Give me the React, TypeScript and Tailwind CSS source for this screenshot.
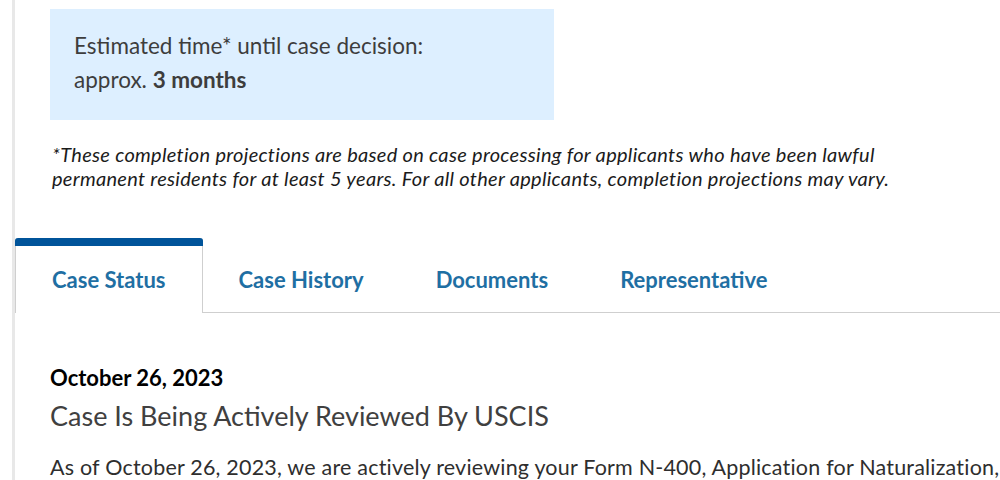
const tabs = ['Case Status', 'Case History', 'Documents', 'Representative']

function App(): React.JSX.Element {
  return (
    <div
      className="w-[1000px] h-[480px] overflow-hidden bg-white"
      style={{ fontFamily: 'Lato, "Noto Sans", sans-serif' }}
    >
      <div className="ml-[12px] h-full border-l-[3px] border-[#e8e8e8] pt-[9px]">
        {/* Processing time estimate */}
        <div className="ml-[35px] w-[504px] h-[111px] bg-[#ddefff] pl-[24px] pt-[20px] text-[22.5px] leading-[34px] text-[#3d3d3d]">
          <p>Estimated time* until case decision:</p>
          <p>
            approx. <span className="font-bold">3 months</span>
          </p>
        </div>

        {/* Footnote */}
        <p className="ml-[37px] mt-[22px] text-[20px] leading-[24px] italic text-[#1b1b1b] tracking-[0.3px] whitespace-nowrap">
          *These completion projections are based on case processing for applicants who have been lawful
          <br />
          permanent residents for at least 5 years. For all other applicants, completion projections may vary.
        </p>

        {/* Tabs */}
        <div className="mt-[48px] flex border-b border-[#cfcfcf] h-[75px]">
          {tabs.map((tab, i) =>
            i === 0 ? (
              <div
                key={tab}
                className="relative -mb-px bg-white border-x border-[#cfcfcf] rounded-t-[3px] px-[36px] pt-[8px] flex items-center text-[22px] font-bold text-[#1f6fa3]"
              >
                <div className="absolute -left-px -right-px top-0 h-[8px] rounded-t-[3px] bg-[#00549a]" />
                {tab}
              </div>
            ) : (
              <div
                key={tab}
                className="px-[36px] pt-[8px] flex items-center text-[22px] font-bold text-[#1f6fa3]"
              >
                {tab}
              </div>
            ),
          )}
        </div>

        {/* Current status */}
        <div className="ml-[35px] mt-[52px]">
          <p className="text-[22px] leading-[26px] font-bold text-black">October 26, 2023</p>
          <h2 className="mt-[9px] text-[27px] leading-[32px] text-[#404040]">
            Case Is Being Actively Reviewed By USCIS
          </h2>
          <p className="mt-[21px] text-[21.5px] leading-[28px] text-[#2e2e2e] tracking-[0.2px] whitespace-nowrap">
            As of October 26, 2023, we are actively reviewing your Form N-400, Application for Naturalization,
          </p>
        </div>
      </div>
    </div>
  )
}

export default App
